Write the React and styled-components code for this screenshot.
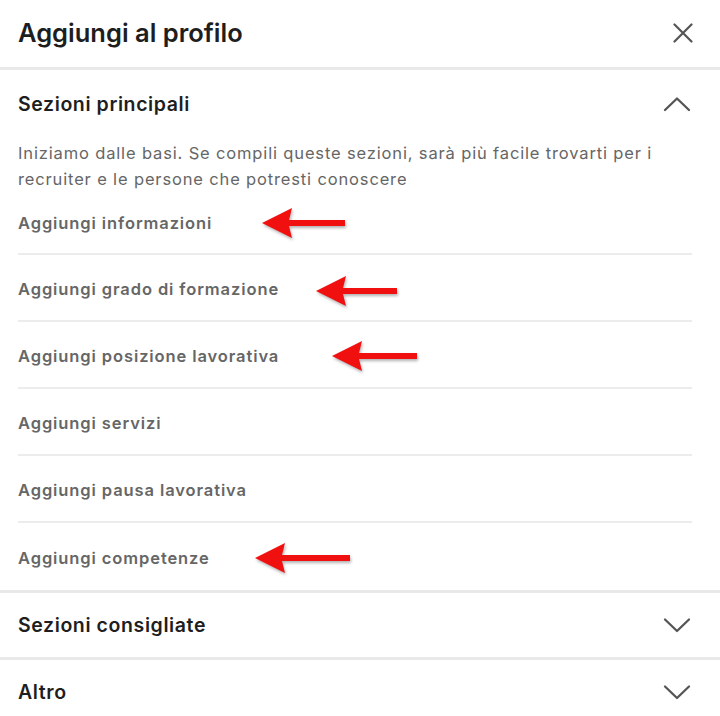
import React from "react";
import styled, { createGlobalStyle } from "styled-components";

const GlobalStyle = createGlobalStyle`
  html, body {
    margin: 0;
    padding: 0;
    background: #fff;
  }
  * { box-sizing: border-box; }
`;

const Panel = styled.div`
  width: 720px;
  height: 716px;
  overflow: hidden;
  background: #fff;
  font-family: Inter, "Liberation Sans", sans-serif;
`;

const Header = styled.div`
  height: 70px;
  display: flex;
  align-items: center;
  justify-content: space-between;
  padding: 0 27px 2px 18px;
  border-bottom: 3px solid #e9e9e9;
`;

const Title = styled.h1`
  margin: 0;
  font-size: 25.5px;
  font-weight: 600;
  color: #1e1e1e;
  letter-spacing: 0;
`;

const IconButton = styled.div`
  width: 20px;
  height: 20px;
  display: flex;
  align-items: center;
  justify-content: center;
  color: #555;
`;

const Section = styled.section`
  border-bottom: ${(p) => (p.last ? "none" : "3px solid #e9e9e9")};
`;

const SectionHead = styled.div`
  height: ${(p) => (p.open ? "63px" : "64px")};
  display: flex;
  align-items: center;
  justify-content: space-between;
  padding: ${(p) => (p.open ? "4px 29px 0 18px" : "0 29px 0 18px")};
`;

const SectionTitle = styled.h2`
  margin: 0;
  font-size: 19.5px;
  font-weight: 600;
  color: #1e1e1e;
  letter-spacing: 0.6px;
`;

const Description = styled.p`
  margin: 0;
  padding: 7px 40px 0 18px;
  font-size: 16.5px;
  line-height: 26px;
  letter-spacing: 0.85px;
  color: #666;
`;

const ItemList = styled.div`
  padding: 0 28px 0 18px;
`;

const Item = styled.div`
  position: relative;
  height: ${(p) => (p.first ? "63px" : "67px")};
  display: flex;
  align-items: center;
  padding-top: ${(p) => (p.first ? "0" : "2px")};
  border-bottom: ${(p) => (p.last ? "none" : "2px solid #ececec")};
  font-size: 16.5px;
  font-weight: 600;
  letter-spacing: 0.9px;
  color: #666;
`;

const Arrow = styled.svg`
  position: absolute;
  top: 50%;
  margin-top: ${(p) => p.dy}px;
  left: ${(p) => p.x}px;
  transform: translateY(-50%);
  filter: drop-shadow(1px 2px 1.5px rgba(0, 0, 0, 0.3));
`;

function RedArrow({ x, length, dy = 0 }) {
  return (
    <Arrow x={x} dy={dy} width={length + 4} height="34" viewBox={`0 0 ${length + 4} 34`}>
      <path
        d={`M1 17 L31 2 L28 14 L${length} 14 L${length} 20 L28 20 L31 32 Z`}
        fill="#f01010"
      />
    </Arrow>
  );
}

const Close = () => (
  <svg width="20" height="20" viewBox="0 0 20 20">
    <path d="M1.5 1.5 L18.5 18.5 M18.5 1.5 L1.5 18.5" stroke="currentColor" strokeWidth="2.2" strokeLinecap="round" />
  </svg>
);

const Chevron = ({ up }) => (
  <svg width="28" height="16" viewBox="0 0 28 16" style={{ color: "#555" }}>
    <path
      d={up ? "M2 14 L14 2.5 L26 14" : "M2 2.5 L14 14 L26 2.5"}
      fill="none"
      stroke="currentColor"
      strokeWidth="2.3"
      strokeLinecap="round"
      strokeLinejoin="round"
    />
  </svg>
);

const items = [
  { label: "Aggiungi informazioni", arrow: { x: 243, length: 84, dy: 0 } },
  { label: "Aggiungi grado di formazione", arrow: { x: 297, length: 82, dy: 3 } },
  { label: "Aggiungi posizione lavorativa", arrow: { x: 313, length: 86, dy: 1 } },
  { label: "Aggiungi servizi" },
  { label: "Aggiungi pausa lavorativa" },
  { label: "Aggiungi competenze", arrow: { x: 236, length: 96, dy: 1 } },
];

export default function App() {
  return (
    <Panel>
      <GlobalStyle />
      <Header>
        <Title>Aggiungi al profilo</Title>
        <IconButton>
          <Close />
        </IconButton>
      </Header>

      <Section>
        <SectionHead open>
          <SectionTitle>Sezioni principali</SectionTitle>
          <Chevron up />
        </SectionHead>
        <Description>
          Iniziamo dalle basi. Se compili queste sezioni, sarà più facile trovarti per i
          recruiter e le persone che potresti conoscere
        </Description>
        <ItemList>
          {items.map((it, i) => (
            <Item key={it.label} first={i === 0} last={i === items.length - 1}>
              {it.label}
              {it.arrow && <RedArrow {...it.arrow} />}
            </Item>
          ))}
        </ItemList>
      </Section>

      <Section>
        <SectionHead>
          <SectionTitle>Sezioni consigliate</SectionTitle>
          <Chevron />
        </SectionHead>
      </Section>

      <Section last>
        <SectionHead>
          <SectionTitle>Altro</SectionTitle>
          <Chevron />
        </SectionHead>
      </Section>
    </Panel>
  );
}
